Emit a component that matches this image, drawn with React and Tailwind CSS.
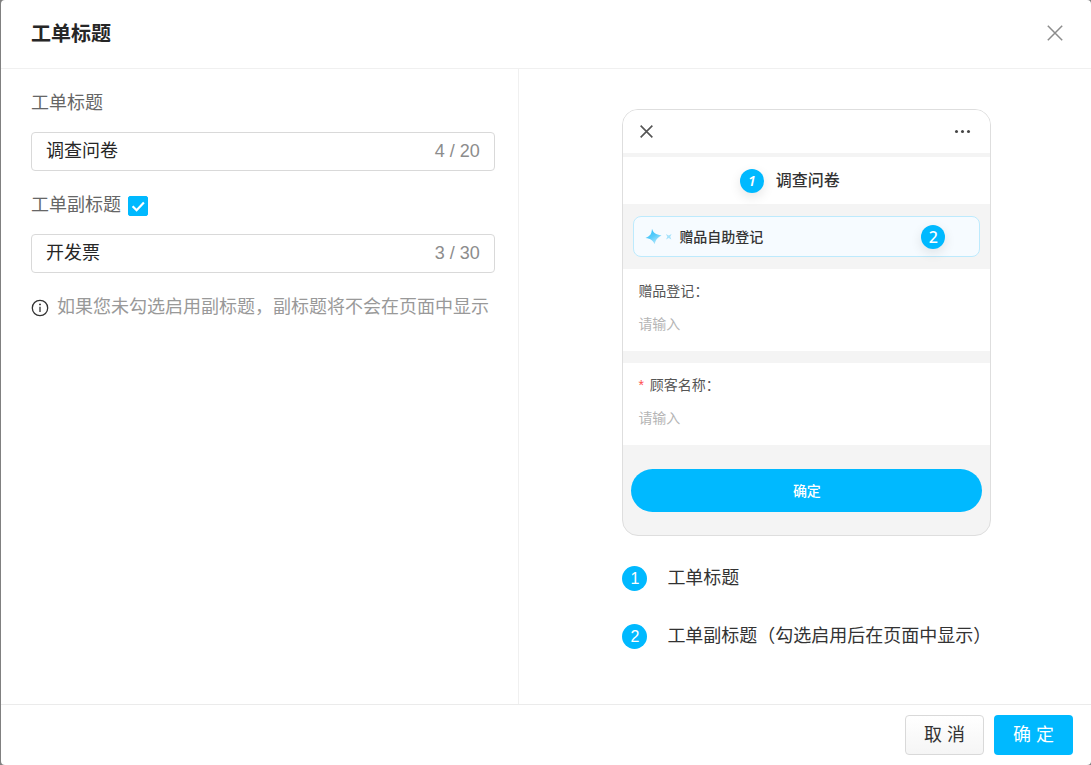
import { useState } from 'react';

const ROOT_FONT = "font-['Liberation_Sans','Noto_Sans_CJK_SC',sans-serif]";

const legend = [
  { no: 1, text: '工单标题' },
  { no: 2, text: '工单副标题（勾选启用后在页面中显示）' },
];

function CloseIcon({ className }) {
  return (
    <svg viewBox="0 0 16 16" className={className} fill="none" stroke="currentColor" aria-hidden="true">
      <path d="M0.8 0.8 15.2 15.2M15.2 0.8 0.8 15.2" />
    </svg>
  );
}

function InfoIcon() {
  return (
    <svg viewBox="0 0 18 18" className="h-[18px] w-[18px] shrink-0 text-[#333]" fill="none" aria-hidden="true">
      <circle cx="9" cy="9" r="7.7" stroke="currentColor" strokeWidth="1.3" />
      <circle cx="9" cy="5.4" r="0.95" fill="currentColor" />
      <path d="M9 7.7V13" stroke="currentColor" strokeWidth="1.3" />
    </svg>
  );
}

function SparkIcon() {
  return (
    <svg viewBox="0 0 28 18" className="h-[18px] w-7 shrink-0" aria-hidden="true">
      <defs>
        <linearGradient id="spark" x1="0.2" y1="0" x2="0.8" y2="1">
          <stop offset="0" stopColor="#27bdfb" />
          <stop offset="0.5" stopColor="#5ccdfa" />
          <stop offset="1" stopColor="#c3ecfd" />
        </linearGradient>
      </defs>
      <path
        d="M7 0.8C8.4 5 10.4 6.4 16.6 7.6C12.6 9.8 11 11.4 9.6 16.2C7.8 12.4 6 10.8 0.4 10C5.2 8.2 6.6 6 7 0.8Z"
        fill="url(#spark)"
      />
      <path d="M20.8 6 23.7 7.5 26.6 6 25.2 8.7 26.4 11.4 23.7 10.1 21 11.4 22.4 8.7Z" fill="#a5e2fb" />
    </svg>
  );
}

function CountInput({ id, value, max, onChange }) {
  return (
    <div className="flex h-[39px] items-center rounded border border-[#d9d9d9] bg-white px-[14px]">
      <input
        id={id}
        type="text"
        maxLength={max}
        value={value}
        onChange={(e) => onChange(e.target.value)}
        className="min-w-0 flex-1 bg-transparent text-lg leading-[29px] text-[#262626] outline-none"
      />
      <span className="text-lg leading-[29px] text-[#8c8c8c]">
        {value.length} / {max}
      </span>
    </div>
  );
}

function PhoneField({ id, label, required }) {
  return (
    <div className="flex h-[82px] flex-col gap-[13px] bg-white px-[15px] pt-3">
      <label htmlFor={id} className="text-sm leading-5 text-[#555]">
        {required && <span className="mr-1.5 text-[#ff4d4f]">*</span>}
        {label}：
      </label>
      <input
        id={id}
        type="text"
        placeholder="请输入"
        className="w-full bg-transparent text-sm leading-5 outline-none placeholder:text-[#b5b5b5]"
      />
    </div>
  );
}

function PhonePreview() {
  return (
    <div className="overflow-hidden rounded-2xl border border-[#dedede] bg-[#f4f4f4]">
      <div className="flex h-[43px] items-center justify-between bg-white pl-[17px] pr-5">
        <button type="button" aria-label="返回" className="text-[#555]">
          <CloseIcon className="h-[13px] w-[13px] stroke-2" />
        </button>
        <button type="button" aria-label="更多" className="flex gap-[3px]">
          <span className="h-[3px] w-[3px] rounded-full bg-[#444]" />
          <span className="h-[3px] w-[3px] rounded-full bg-[#444]" />
          <span className="h-[3px] w-[3px] rounded-full bg-[#444]" />
        </button>
      </div>

      <div className="mt-1 flex h-[47px] items-center justify-center gap-3 bg-white pr-[34px]">
        <span className="flex h-6 w-6 items-center justify-center rounded-full bg-[#00b9ff] font-['Noto_Sans',sans-serif] text-sm font-semibold italic text-white shadow-[0_4px_12px_rgba(0,0,0,0.1)]">
          1
        </span>
        <span className="text-base font-medium text-[#333]">调查问卷</span>
      </div>

      <div className="px-[10px] py-3">
        <div className="flex h-[41px] items-center gap-1.5 rounded-lg border border-[#bdeafd] bg-[#f6fbff] pl-[11px] pr-[34px]">
          <SparkIcon />
          <span className="flex-1 text-sm font-medium text-[#333]">赠品自助登记</span>
          <span className="flex h-6 w-6 items-center justify-center rounded-full bg-[#00b9ff] font-['Noto_Sans',sans-serif] text-base font-medium text-white shadow-[0_4px_12px_rgba(0,0,0,0.1)]">
            2
          </span>
        </div>
      </div>

      <div className="flex flex-col gap-3">
        <PhoneField id="gift" label="赠品登记" />
        <PhoneField id="customer" label="顾客名称" required />
      </div>

      <div className="px-2 pb-[23px] pt-6">
        <button
          type="button"
          className="h-[43px] w-full rounded-full bg-[#00b9ff] text-sm font-medium text-white"
        >
          确定
        </button>
      </div>
    </div>
  );
}

export default function App() {
  const [title, setTitle] = useState('调查问卷');
  const [subtitle, setSubtitle] = useState('开发票');
  const [showSubtitle, setShowSubtitle] = useState(true);

  return (
    <div className={`flex min-h-screen bg-[#808080] pl-px ${ROOT_FONT}`}>
      <div role="dialog" aria-labelledby="dialog-title" className="flex flex-1 flex-col rounded bg-white">
        <header className="flex h-[69px] items-center justify-between border-b border-[#f0f0f0] pl-[30px] pr-7">
          <h1 id="dialog-title" className="text-xl font-bold text-[#262626]">工单标题</h1>
          <button type="button" aria-label="关闭" className="pb-0.5 text-[#8c8c8c]">
            <CloseIcon className="h-4 w-4 stroke-[1.5]" />
          </button>
        </header>

        <main className="flex flex-1">
          <section className="flex w-[47.5%] flex-col gap-5 border-r border-[#f0f0f0] pl-[30px] pr-[23px] pt-5">
            <div className="flex flex-col gap-[14px]">
              <label htmlFor="title" className="text-lg leading-[29px] text-[#666]">工单标题</label>
              <CountInput id="title" value={title} max={20} onChange={setTitle} />
            </div>

            <div className="flex flex-col gap-[14px]">
              <div className="flex items-center gap-[7px]">
                <label htmlFor="subtitle" className="text-lg leading-[29px] text-[#666]">工单副标题</label>
                <span className="relative h-5 w-5">
                  <input
                    type="checkbox"
                    aria-label="启用副标题"
                    checked={showSubtitle}
                    onChange={(e) => setShowSubtitle(e.target.checked)}
                    className="peer block h-5 w-5 appearance-none rounded-xs border border-[#d9d9d9] bg-white checked:border-[#00b9ff] checked:bg-[#00b9ff]"
                  />
                  <svg
                    viewBox="0 0 20 20"
                    className="pointer-events-none absolute inset-0 hidden h-5 w-5 peer-checked:block"
                    fill="none"
                    stroke="#fff"
                    strokeWidth="2.2"
                    aria-hidden="true"
                  >
                    <path d="M4.6 10.2 8.6 14.2 15.9 6.6" />
                  </svg>
                </span>
              </div>
              <CountInput id="subtitle" value={subtitle} max={30} onChange={setSubtitle} />
            </div>

            <p className="flex items-center gap-2 whitespace-nowrap text-lg leading-[29px] text-[#999]">
              <InfoIcon />
              如果您未勾选启用副标题，副标题将不会在页面中显示
            </p>
          </section>

          <section className="flex flex-1 justify-center pl-1 pt-10">
            <div className="w-[369px]">
              <PhonePreview />
              <ul className="mt-[30px] flex flex-col gap-[33px]">
                {legend.map((item) => (
                  <li key={item.no} className="flex h-[25px] items-center gap-5">
                    <span className="flex h-[25px] w-[25px] shrink-0 items-center justify-center rounded-full bg-[#00b9ff] text-base text-white">
                      {item.no}
                    </span>
                    <span className="whitespace-nowrap text-lg leading-[29px] text-[#333]">{item.text}</span>
                  </li>
                ))}
              </ul>
            </div>
          </section>
        </main>

        <footer className="flex items-center justify-end gap-[10px] border-t border-[#ebebeb] py-[10px] pr-[18px]">
          <button
            type="button"
            className="h-10 w-[79px] rounded border border-[#d9d9d9] bg-linear-to-b from-white to-[#f5f5f5] text-lg text-[#333]"
          >
            取 消
          </button>
          <button type="button" className="h-10 w-[79px] rounded bg-[#00b9ff] text-lg text-white">
            确 定
          </button>
        </footer>
      </div>
    </div>
  );
}
